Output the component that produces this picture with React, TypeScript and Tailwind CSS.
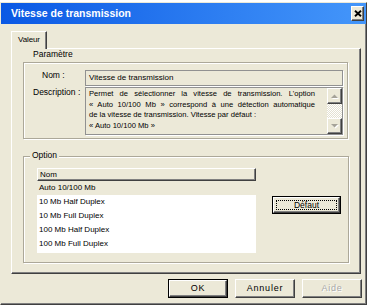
import React from "react";

const raised =
  "bg-[#ECE9D8] border border-t-white border-l-white border-r-[#404040] border-b-[#404040] shadow-[inset_-1px_-1px_0_#808080]";
const etched = "border border-[#ACA899] shadow-[inset_1px_1px_0_#ffffff,1px_1px_0_#ffffff]";
const sunken = "border border-[#919191] shadow-[1px_1px_0_#ffffff]";

function Arrow({ up }: { up?: boolean }) {
  return (
    <svg width="9" height="6" viewBox="0 0 9 6">
      {up ? (
        <>
          <polygon points="1,5 8,5 4.5,1.5" fill="#ffffff" transform="translate(1,1)" />
          <polygon points="1,5 8,5 4.5,1.5" fill="#A6A399" />
        </>
      ) : (
        <>
          <polygon points="1,1 8,1 4.5,4.5" fill="#ffffff" transform="translate(1,1)" />
          <polygon points="1,1 8,1 4.5,4.5" fill="#A6A399" />
        </>
      )}
    </svg>
  );
}

function DlgButton({ label, isDefault, disabled }: { label: string; isDefault?: boolean; disabled?: boolean }) {
  const text = (
    <span
      className={
        "text-[9px] tracking-[0.8px] leading-none " +
        (disabled ? "text-[#A8A8A8] [text-shadow:1px_1px_0_#ffffff]" : "text-black")
      }
    >
      {label}
    </span>
  );
  if (isDefault) {
    return (
      <div className="w-[60px] h-[19px] border border-black flex">
        <div className={raised + " flex-1 flex items-center justify-center"}>{text}</div>
      </div>
    );
  }
  return <div className={raised + " w-[60px] h-[19px] flex items-center justify-center"}>{text}</div>;
}

const rows = ["Auto 10/100 Mb", "10 Mb Half Duplex", "10 Mb Full Duplex", "100 Mb Half Duplex", "100 Mb Full Duplex"];

export default function App() {
  return (
    <div className="w-[378px] h-[308px] bg-white pt-[2px] font-['Liberation_Sans',Arial,sans-serif] text-black">
      {/* dialog */}
      <div className="w-[367px] h-[303px] bg-[#ECE9D8] border border-t-[#ECE9D8] border-l-[#ECE9D8] border-r-[#404040] border-b-[#404040] shadow-[inset_-1px_-1px_0_#808080] flex flex-col">
        {/* title bar */}
        <div className="h-[21px] bg-gradient-to-r from-[#0A58E4] to-[#4496FA] flex items-center justify-between pl-[10px] pr-[2px]">
          <span className="text-white font-bold text-[10.5px] leading-none">Vitesse de transmission</span>
          <div className={raised + " w-[13px] h-[15px] flex items-center justify-center"}>
            <svg width="8" height="7" viewBox="0 0 8 7">
              <path d="M1 0.8 L7 6.2 M7 0.8 L1 6.2" stroke="#000" strokeWidth="1.9" />
            </svg>
          </div>
        </div>

        {/* body */}
        <div className="pl-[10px] pt-[7px] flex flex-col">
          {/* tab */}
          <div className="relative z-10 w-[36px] h-[18px] bg-[#ECE9D8] border-t border-l border-t-white border-l-white border-r border-r-[#404040] shadow-[inset_-1px_0_0_#808080] flex items-start pl-[6px] pt-[3px]">
            <span className="text-[8px] tracking-[-0.1px] leading-[10px]">Valeur</span>
          </div>

          {/* tab panel */}
          <div className="-mt-[1px] w-[350px] h-[226px] border border-t-white border-l-white border-r-[#404040] border-b-[#404040] shadow-[inset_-1px_-1px_0_#808080] flex flex-col">
            <div className="pl-[21px] text-[8.5px] leading-[11px]">Paramètre</div>

            {/* Paramètre box */}
            <div className={etched + " ml-[11px] mt-[2px] w-[325px] h-[77px] pt-[7px] flex flex-col"}>
              <div className="flex items-start">
                <div className="w-[61px] pl-[18px] text-[8.5px] leading-[10px]">Nom :</div>
                <div className={sunken + " w-[258px] h-[16px] bg-[#ECE9D8] flex items-center pl-[3px]"}>
                  <span className="text-[8px] leading-none">Vitesse de transmission</span>
                </div>
              </div>
              <div className="flex items-start mt-[1px]">
                <div className="w-[61px] pl-[9px] text-[8.5px] leading-[10px]">Description :</div>
                <div className={sunken + " w-[258px] h-[48px] bg-[#ECE9D8] flex"}>
                  <div className="flex-1 pl-[3px] pt-[1px] text-[7.6px] leading-[10.5px]">
                    <div className="w-[226px] text-justify [text-align-last:justify]">
                      Permet de sélectionner la vitesse de transmission. L'option
                    </div>
                    <div className="w-[226px] text-justify [text-align-last:justify]">
                      « Auto 10/100 Mb » correspond à une détection automatique
                    </div>
                    <div>de la vitesse de transmission. Vitesse par défaut :</div>
                    <div>« Auto 10/100 Mb »</div>
                  </div>
                  <div className="w-[15px] flex flex-col">
                    <div className={raised + " h-[16px] flex items-center justify-center"}>
                      <Arrow up />
                    </div>
                    <div className="flex-1 bg-[repeating-conic-gradient(#ffffff_0_25%,#E4E1D2_0_50%)] bg-[length:2px_2px]" />
                    <div className={raised + " h-[16px] flex items-center justify-center"}>
                      <Arrow />
                    </div>
                  </div>
                </div>
              </div>
            </div>

            {/* Option box */}
            <div className={etched + " relative ml-[11px] mt-[17px] w-[326px] h-[107px] flex items-start"}>
              <div className="absolute -top-[7px] left-[6px] px-[2px] bg-[#ECE9D8] text-[8.5px] leading-[11px]">
                Option
              </div>
              <div className="ml-[13px] mt-[11px] w-[219px] h-[85px] bg-white flex flex-col">
                <div className={raised + " h-[13px] flex items-center pl-[2px]"}>
                  <span className="text-[8px] leading-none">Nom</span>
                </div>
                {rows.map((r, i) => (
                  <div
                    key={r}
                    className={"h-[14px] flex items-center pl-[2px] " + (i === 0 ? "bg-[#ECE9D8]" : "bg-white")}
                  >
                    <span className="text-[8px] leading-none">{r}</span>
                  </div>
                ))}
              </div>
              <div className="ml-[16px] mt-[39px] w-[69px] h-[18px] border border-black flex">
                <div className={raised + " flex-1 p-[2px] flex"}>
                  <div className="flex-1 border border-dotted border-black flex items-center justify-center">
                    <span className="text-[8.5px] leading-none">Défaut</span>
                  </div>
                </div>
              </div>
            </div>
          </div>

          {/* bottom buttons */}
          <div className="mt-[5px] w-[351px] flex justify-end gap-[7px]">
            <DlgButton label="OK" isDefault />
            <DlgButton label="Annuler" />
            <DlgButton label="Aide" disabled />
          </div>
        </div>
      </div>
    </div>
  );
}
